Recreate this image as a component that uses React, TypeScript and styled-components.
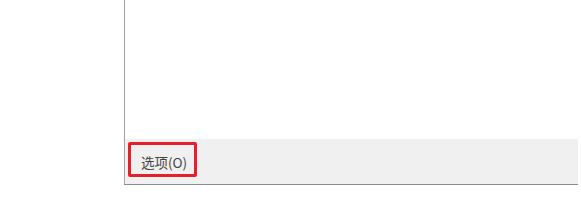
import styled, { createGlobalStyle } from 'styled-components'

const Global = createGlobalStyle`
  body {
    margin: 0;
    background: #ffffff;
    font-family: "Noto Sans CJK SC", "Liberation Sans", sans-serif;
  }
`

const Page = styled.div`
  width: 581px;
  height: 213px;
  overflow: hidden;
  background: #ffffff;
`

const Window = styled.div`
  margin-left: 124px;
  width: 453px;
  height: 184px;
  display: flex;
  flex-direction: column;
  border-left: 1px solid #a3a3a3;
  border-bottom: 1px solid #8c8c8c;
`

const Content = styled.div`
  height: 139px;
  background: #ffffff;
`

const Footer = styled.div`
  flex: 1;
  display: flex;
  align-items: flex-start;
  padding: 3px 0 0 3px;
  background: #f0f0f0;
`

const Highlight = styled.div`
  height: 29px;
  width: 53px;
  border: 3px solid #e3202c;
  border-radius: 2px;
  display: flex;
  align-items: center;
  padding-left: 10px;
  box-sizing: content-box;
`

const OptionButton = styled.span`
  font-size: 13.5px;
  color: #444444;
  white-space: nowrap;
  margin-top: 4px;
`

const App = () => {
  return (
    <Page>
      <Global />
      <Window>
        <Content />
        <Footer>
          <Highlight>
            <OptionButton>选项(O)</OptionButton>
          </Highlight>
        </Footer>
      </Window>
    </Page>
  )
}

export default App
